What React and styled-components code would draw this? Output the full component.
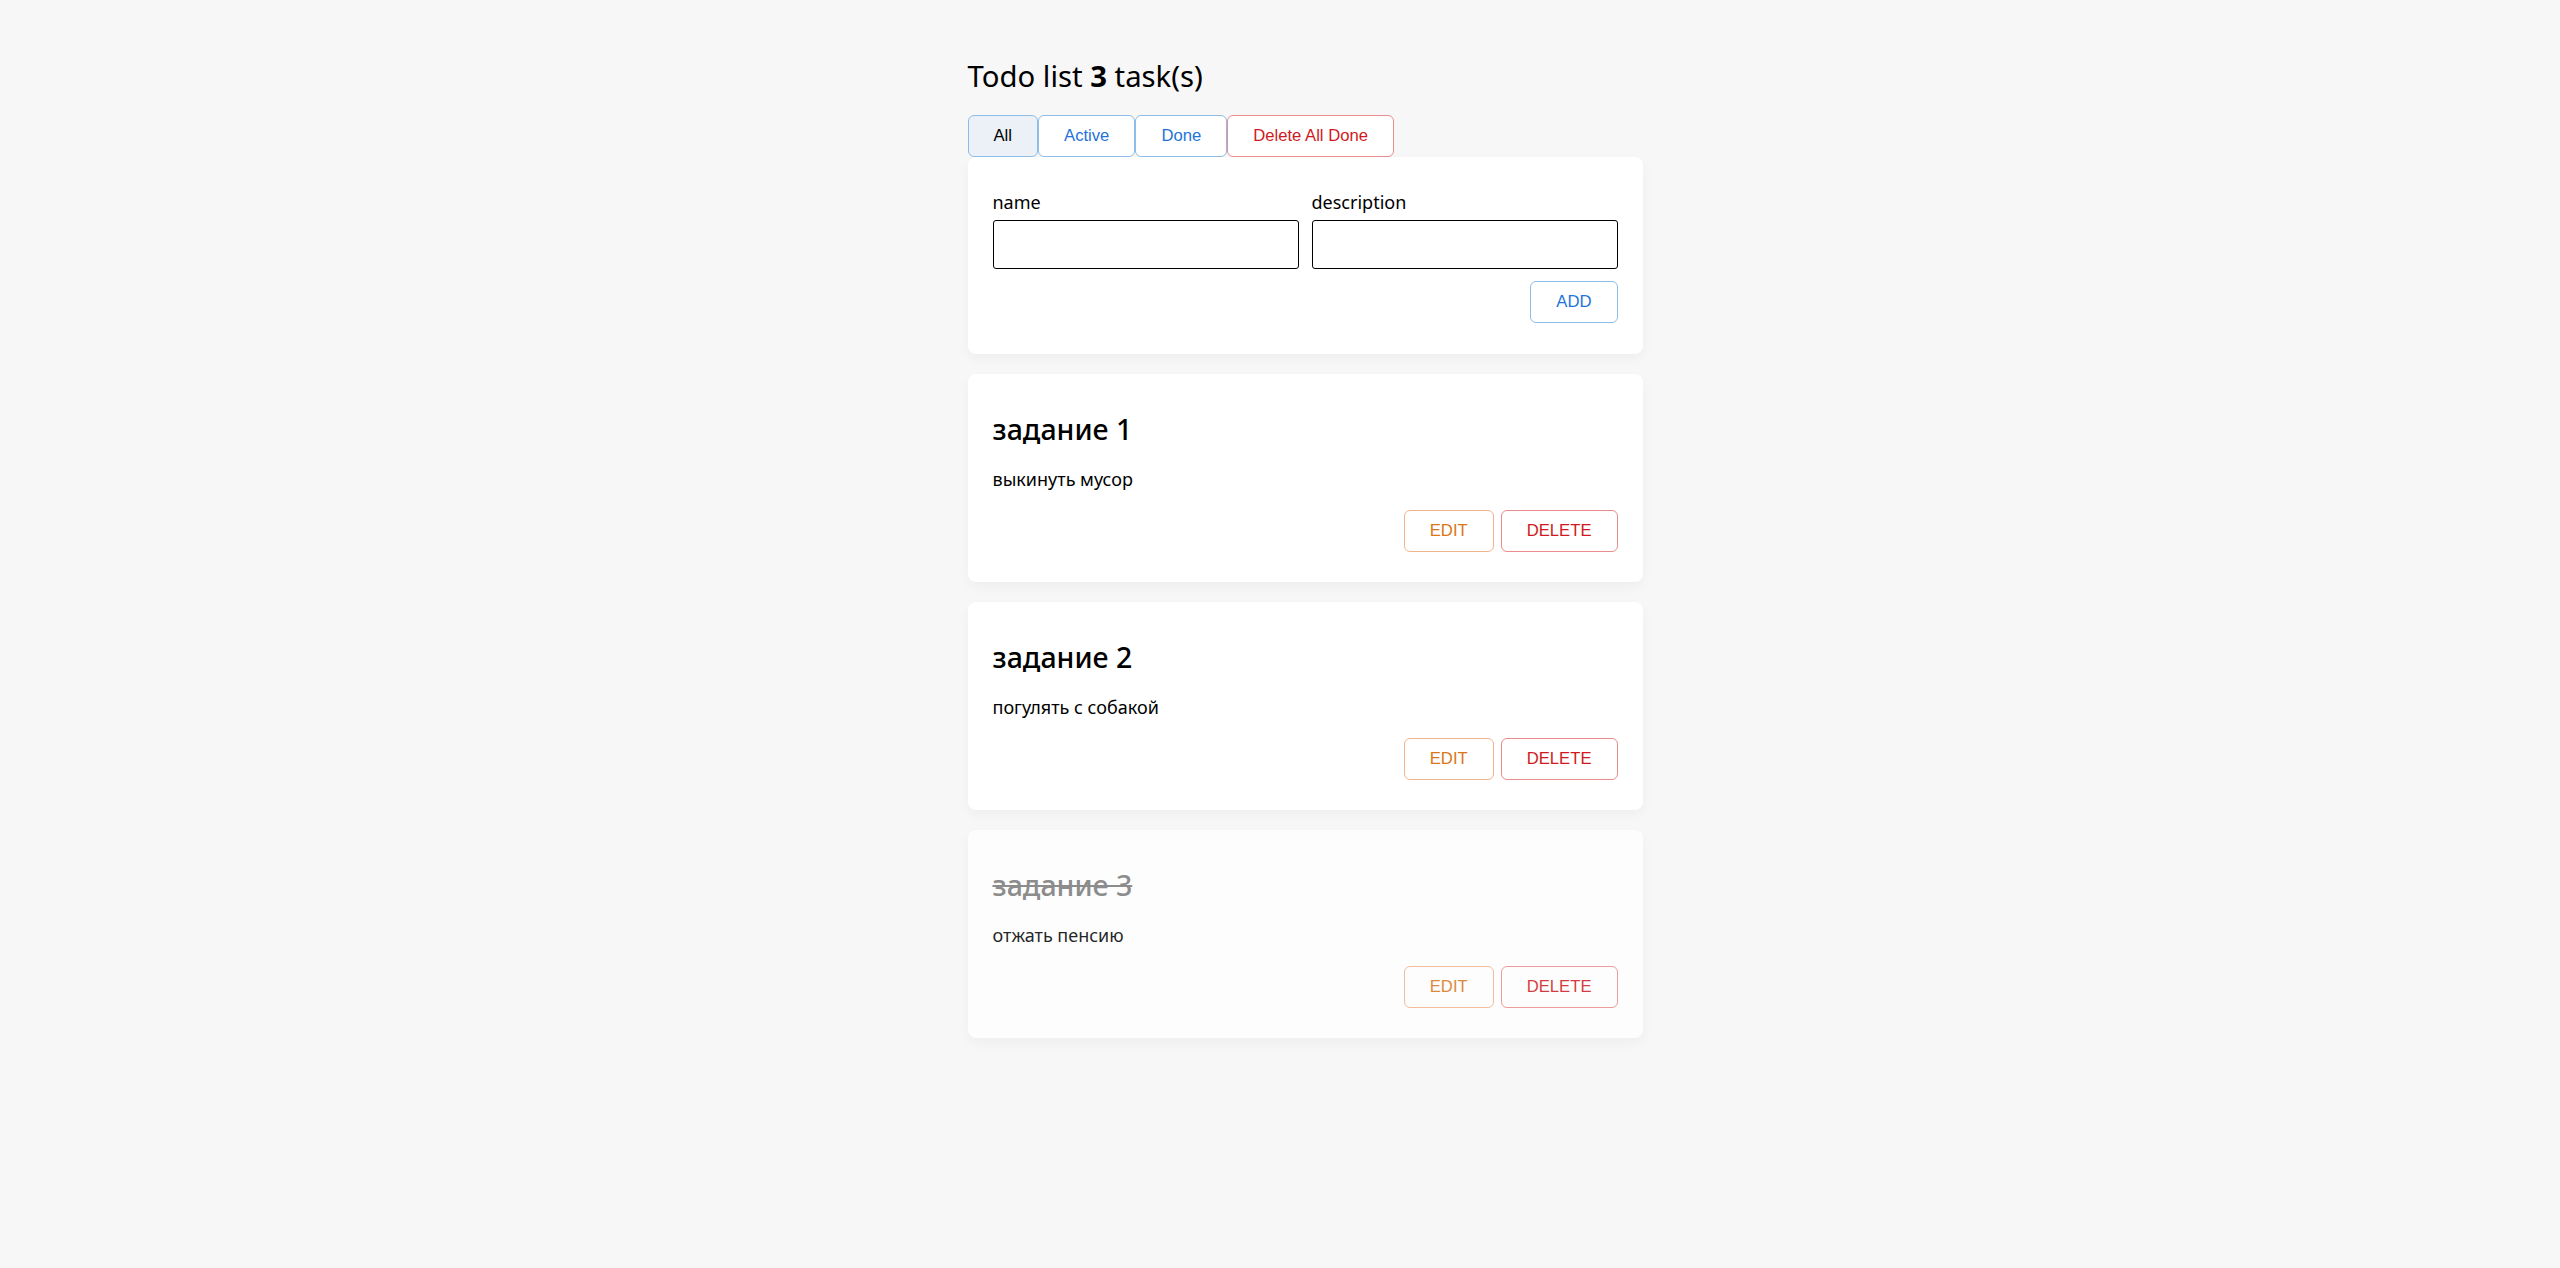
import React, { useState } from "react";
import styled, { createGlobalStyle, css } from "styled-components";

const GlobalStyle = createGlobalStyle`
  html, body { margin: 0; padding: 0; background: #f7f7f7; }
  body { font-family: "Noto Sans", "Open Sans", sans-serif; color: #000; }
  * { box-sizing: border-box; }
`;

const Page = styled.div`
  width: 725px;
  margin: 0 auto;
  padding: 56px 0 40px 50px;
`;

const Title = styled.h1`
  margin: 0 0 19px;
  font-size: 29.3px;
  line-height: 40px;
  font-weight: 400;
  b { font-weight: 700; }
`;

const palette = {
  neutral: { text: "#000", border: "#8fbdea", bg: "#ebf1f7" },
  blue: { text: "#1f73d9", border: "#8fbdea", bg: "#fff" },
  red: { text: "#cf1a22", border: "#ec8b8d", bg: "#fff" },
  orange: { text: "#d9761a", border: "#efb58c", bg: "#fff" },
};

const Button = styled.button`
  font-family: "Liberation Sans", Arial, sans-serif;
  font-size: 16.67px;
  line-height: 20px;
  padding: 10px 25px;
  border-radius: 6px;
  cursor: pointer;
  ${({ $tone = "blue" }) => css`
    color: ${palette[$tone].text};
    border: 1px solid ${palette[$tone].border};
    background: ${palette[$tone].bg};
  `}
`;

const FilterBar = styled.div`
  display: flex;
  gap: 0;
`;

const Card = styled.div`
  background: #fff;
  border-radius: 8px;
  box-shadow: 0 5px 12px rgba(0, 0, 0, 0.04);
  padding: 0 25px;
`;

const FormCard = styled(Card)`
  padding-top: 33px;
  padding-bottom: 31px;
  margin-bottom: 20px;
`;

const Fields = styled.div`
  display: grid;
  grid-template-columns: 1fr 1fr;
  column-gap: 13px;
`;

const Field = styled.label`
  display: flex;
  flex-direction: column;
  font-size: 18px;
  line-height: 24px;
  span { margin-bottom: 6px; }
`;

const Input = styled.input`
  height: 49px;
  border: 1px solid #000;
  border-radius: 3px;
  font-family: inherit;
  font-size: 18px;
  padding: 0 10px;
  background: #fff;
  outline: none;
`;

const Actions = styled.div`
  display: flex;
  justify-content: flex-end;
  gap: 7px;
  margin-top: ${({ $top }) => $top || 0}px;
`;

const TaskList = styled.div`
  display: flex;
  flex-direction: column;
  gap: 20px;
`;

const TaskCard = styled(Card)`
  padding-top: 37px;
  padding-bottom: 30px;
  opacity: ${({ $done }) => ($done ? 0.85 : 1)};
`;

const TaskName = styled.h3`
  margin: 0 0 20px;
  font-size: 28.5px;
  line-height: 36px;
  font-weight: 500;
  color: ${({ $done }) => ($done ? "#7a7a7a" : "#000")};
  text-decoration: ${({ $done }) => ($done ? "line-through" : "none")};
`;

const TaskDesc = styled.p`
  margin: 0 0 19px;
  font-size: 18px;
  line-height: 24px;
`;

const tasks = [
  { id: 1, name: "задание 1", description: "выкинуть мусор", done: false },
  { id: 2, name: "задание 2", description: "погулять с собакой", done: false },
  { id: 3, name: "задание 3", description: "отжать пенсию", done: true },
];

export default function App() {
  const [name, setName] = useState("");
  const [desc, setDesc] = useState("");
  return (
    <>
      <GlobalStyle />
      <Page>
        <Title>
          Todo list <b>3</b> task(s)
        </Title>
        <FilterBar>
          <Button $tone="neutral">All</Button>
          <Button $tone="blue">Active</Button>
          <Button $tone="blue">Done</Button>
          <Button $tone="red">Delete All Done</Button>
        </FilterBar>
        <FormCard>
          <Fields>
            <Field>
              <span>name</span>
              <Input value={name} onChange={(e) => setName(e.target.value)} />
            </Field>
            <Field>
              <span>description</span>
              <Input value={desc} onChange={(e) => setDesc(e.target.value)} />
            </Field>
          </Fields>
          <Actions $top={12}>
            <Button $tone="blue">ADD</Button>
          </Actions>
        </FormCard>
        <TaskList>
          {tasks.map((t) => (
            <TaskCard key={t.id} $done={t.done}>
              <TaskName $done={t.done}>{t.name}</TaskName>
              <TaskDesc>{t.description}</TaskDesc>
              <Actions>
                <Button $tone="orange">EDIT</Button>
                <Button $tone="red">DELETE</Button>
              </Actions>
            </TaskCard>
          ))}
        </TaskList>
      </Page>
    </>
  );
}
